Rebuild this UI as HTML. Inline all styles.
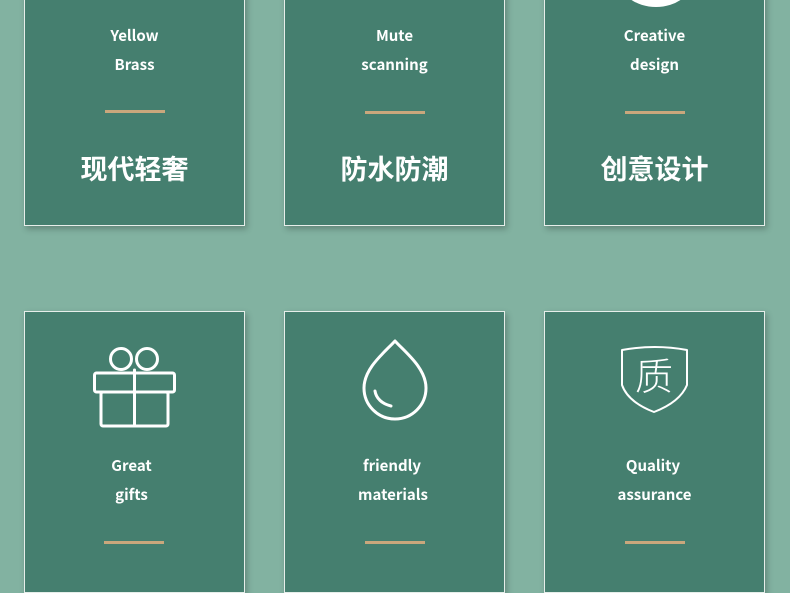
<!DOCTYPE html>
<html><head><meta charset="utf-8"><style>
body{margin:0;width:790px;height:574px;overflow:hidden;background:#82b2a1;position:relative;font-family:"Noto Sans CJK SC","Liberation Sans",sans-serif}
.c{position:absolute;width:219px;background:#457f6f;border:1px solid #e6eeea;box-shadow:2px 3px 6px rgba(0,0,0,.25);color:#fff;text-align:center}
.t{position:absolute;left:0;right:0;font-size:15px;font-weight:bold;line-height:20px}
.l{position:absolute;left:50%;margin-left:-30px;width:60px;height:3px;background:#caa77c}
.h{position:absolute;left:0;right:0;font-size:27px;font-weight:bold;line-height:30px}
svg{position:absolute;left:0;top:0}
</style></head><body>
<div class="c" style="left:24px;top:-10px;height:234px"><div class="t" style="top:35px">Yellow</div><div class="t" style="top:64px">Brass</div><div class="l" style="top:119px"></div><div class="h" style="top:162px">现代轻奢</div></div>
<div class="c" style="left:284px;top:-10px;height:234px"><div class="t" style="top:35px">Mute</div><div class="t" style="top:64px">scanning</div><div class="l" style="top:120px"></div><div class="h" style="top:162px">防水防潮</div></div>
<div class="c" style="left:544px;top:-10px;height:234px;overflow:hidden"><div style="position:absolute;left:74px;top:-40px;width:74px;height:56px;border-radius:50%;background:#fff"></div><div class="t" style="top:35px">Creative</div><div class="t" style="top:64px">design</div><div class="l" style="top:120px"></div><div class="h" style="top:162px">创意设计</div></div>
<div class="c" style="left:24px;top:311px;height:280px"><div class="t" style="top:144px;left:-6px">Great</div><div class="t" style="top:173px;left:-6px">gifts</div><div class="l" style="top:229px;margin-left:-31px"></div></div>
<div class="c" style="left:284px;top:311px;height:280px"><div class="t" style="top:144px;left:-5px">friendly</div><div class="t" style="top:173px;left:-3px">materials</div><div class="l" style="top:229px"></div></div>
<div class="c" style="left:544px;top:311px;height:280px"><div class="t" style="top:144px;left:-3px">Quality</div><div class="t" style="top:173px">assurance</div><div class="l" style="top:229px"></div></div>
<svg width="790" height="574" fill="none" stroke="#fff" stroke-width="3" stroke-linejoin="round" stroke-linecap="round">
<circle cx="121" cy="359" r="10.5"/><circle cx="147" cy="359" r="10.5"/>
<rect x="94.5" y="373" width="80" height="19" rx="2"/>
<rect x="101" y="392" width="67" height="34" rx="2"/>
<line x1="134.5" y1="370" x2="134.5" y2="426"/>
<path d="M395 341 C385 352 364 368 364 388 A31 31 0 0 0 426 388 C426 368 405 352 395 341 Z"/>
<path d="M375 391 C376 398 382 404 391 406"/>
<path d="M622 350 Q655 344 687 350 L687 385 Q680 402 654 412 Q628 402 622 385 Z" stroke-width="2"/>
<text x="654" y="390" fill="#fff" stroke="none" font-size="38" text-anchor="middle" font-family="Noto Sans CJK SC,sans-serif" font-weight="300">质</text>
</svg>
</body></html>
